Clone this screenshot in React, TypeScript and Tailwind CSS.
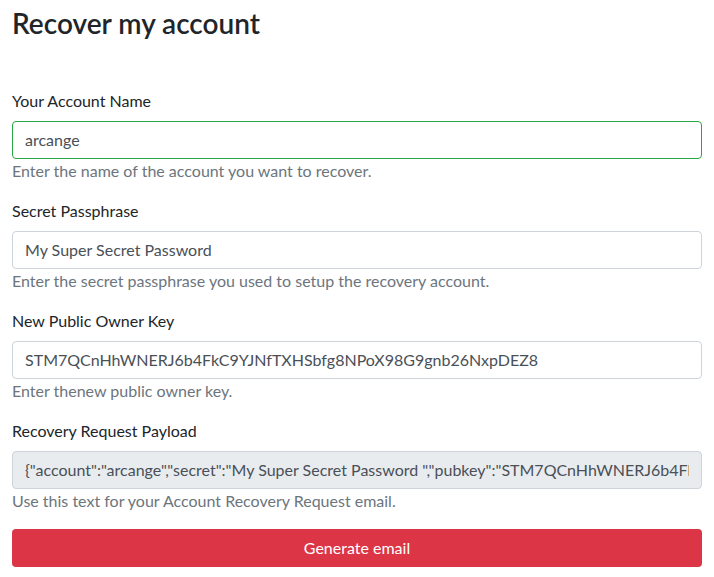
import React from "react";

const font = { fontFamily: 'Lato, "Noto Sans", sans-serif' };

function Field({
  label,
  value,
  help,
  valid,
  readOnly,
}: {
  label: string;
  value: string;
  help: string;
  valid?: boolean;
  readOnly?: boolean;
}) {
  return (
    <div className="mb-4">
      <label className="block mb-2 text-[16px] leading-6 text-[#212529]">{label}</label>
      <input
        className={
          "block w-full h-[38px] px-3 rounded text-[16px] text-[#495057] border outline-none " +
          (valid ? "border-[#28a745] " : "border-[#ced4da] ") +
          (readOnly ? "bg-[#e9ecef]" : "bg-white")
        }
        style={font}
        defaultValue={value}
        readOnly={readOnly}
      />
      <div className="text-[16px] leading-6 text-[#6c757d]">{help}</div>
    </div>
  );
}

export default function App() {
  const payload =
    '{"account":"arcange","secret":"My Super Secret Password ","pubkey":"STM7QCnHhWNERJ6b4FkC9YJNfTXHSbfg8NPoX98G9gnb26NxpDEZ8"}';
  return (
    <div className="min-h-screen bg-white px-3" style={font}>
      <h3 className="pt-[7px] text-[28px] leading-[1.2] font-semibold text-[#212529] mb-[48px]">
        Recover my account
      </h3>
      <Field
        label="Your Account Name"
        value="arcange"
        help="Enter the name of the account you want to recover."
        valid
      />
      <Field
        label="Secret Passphrase"
        value="My Super Secret Password"
        help="Enter the secret passphrase you used to setup the recovery account."
      />
      <Field
        label="New Public Owner Key"
        value="STM7QCnHhWNERJ6b4FkC9YJNfTXHSbfg8NPoX98G9gnb26NxpDEZ8"
        help="Enter thenew public owner key."
      />
      <Field
        label="Recovery Request Payload"
        value={payload}
        help="Use this text for your Account Recovery Request email."
        readOnly
      />
      <button className="w-full h-[38px] rounded bg-[#dc3545] text-white text-[16px]" style={font}>
        Generate email
      </button>
    </div>
  );
}
